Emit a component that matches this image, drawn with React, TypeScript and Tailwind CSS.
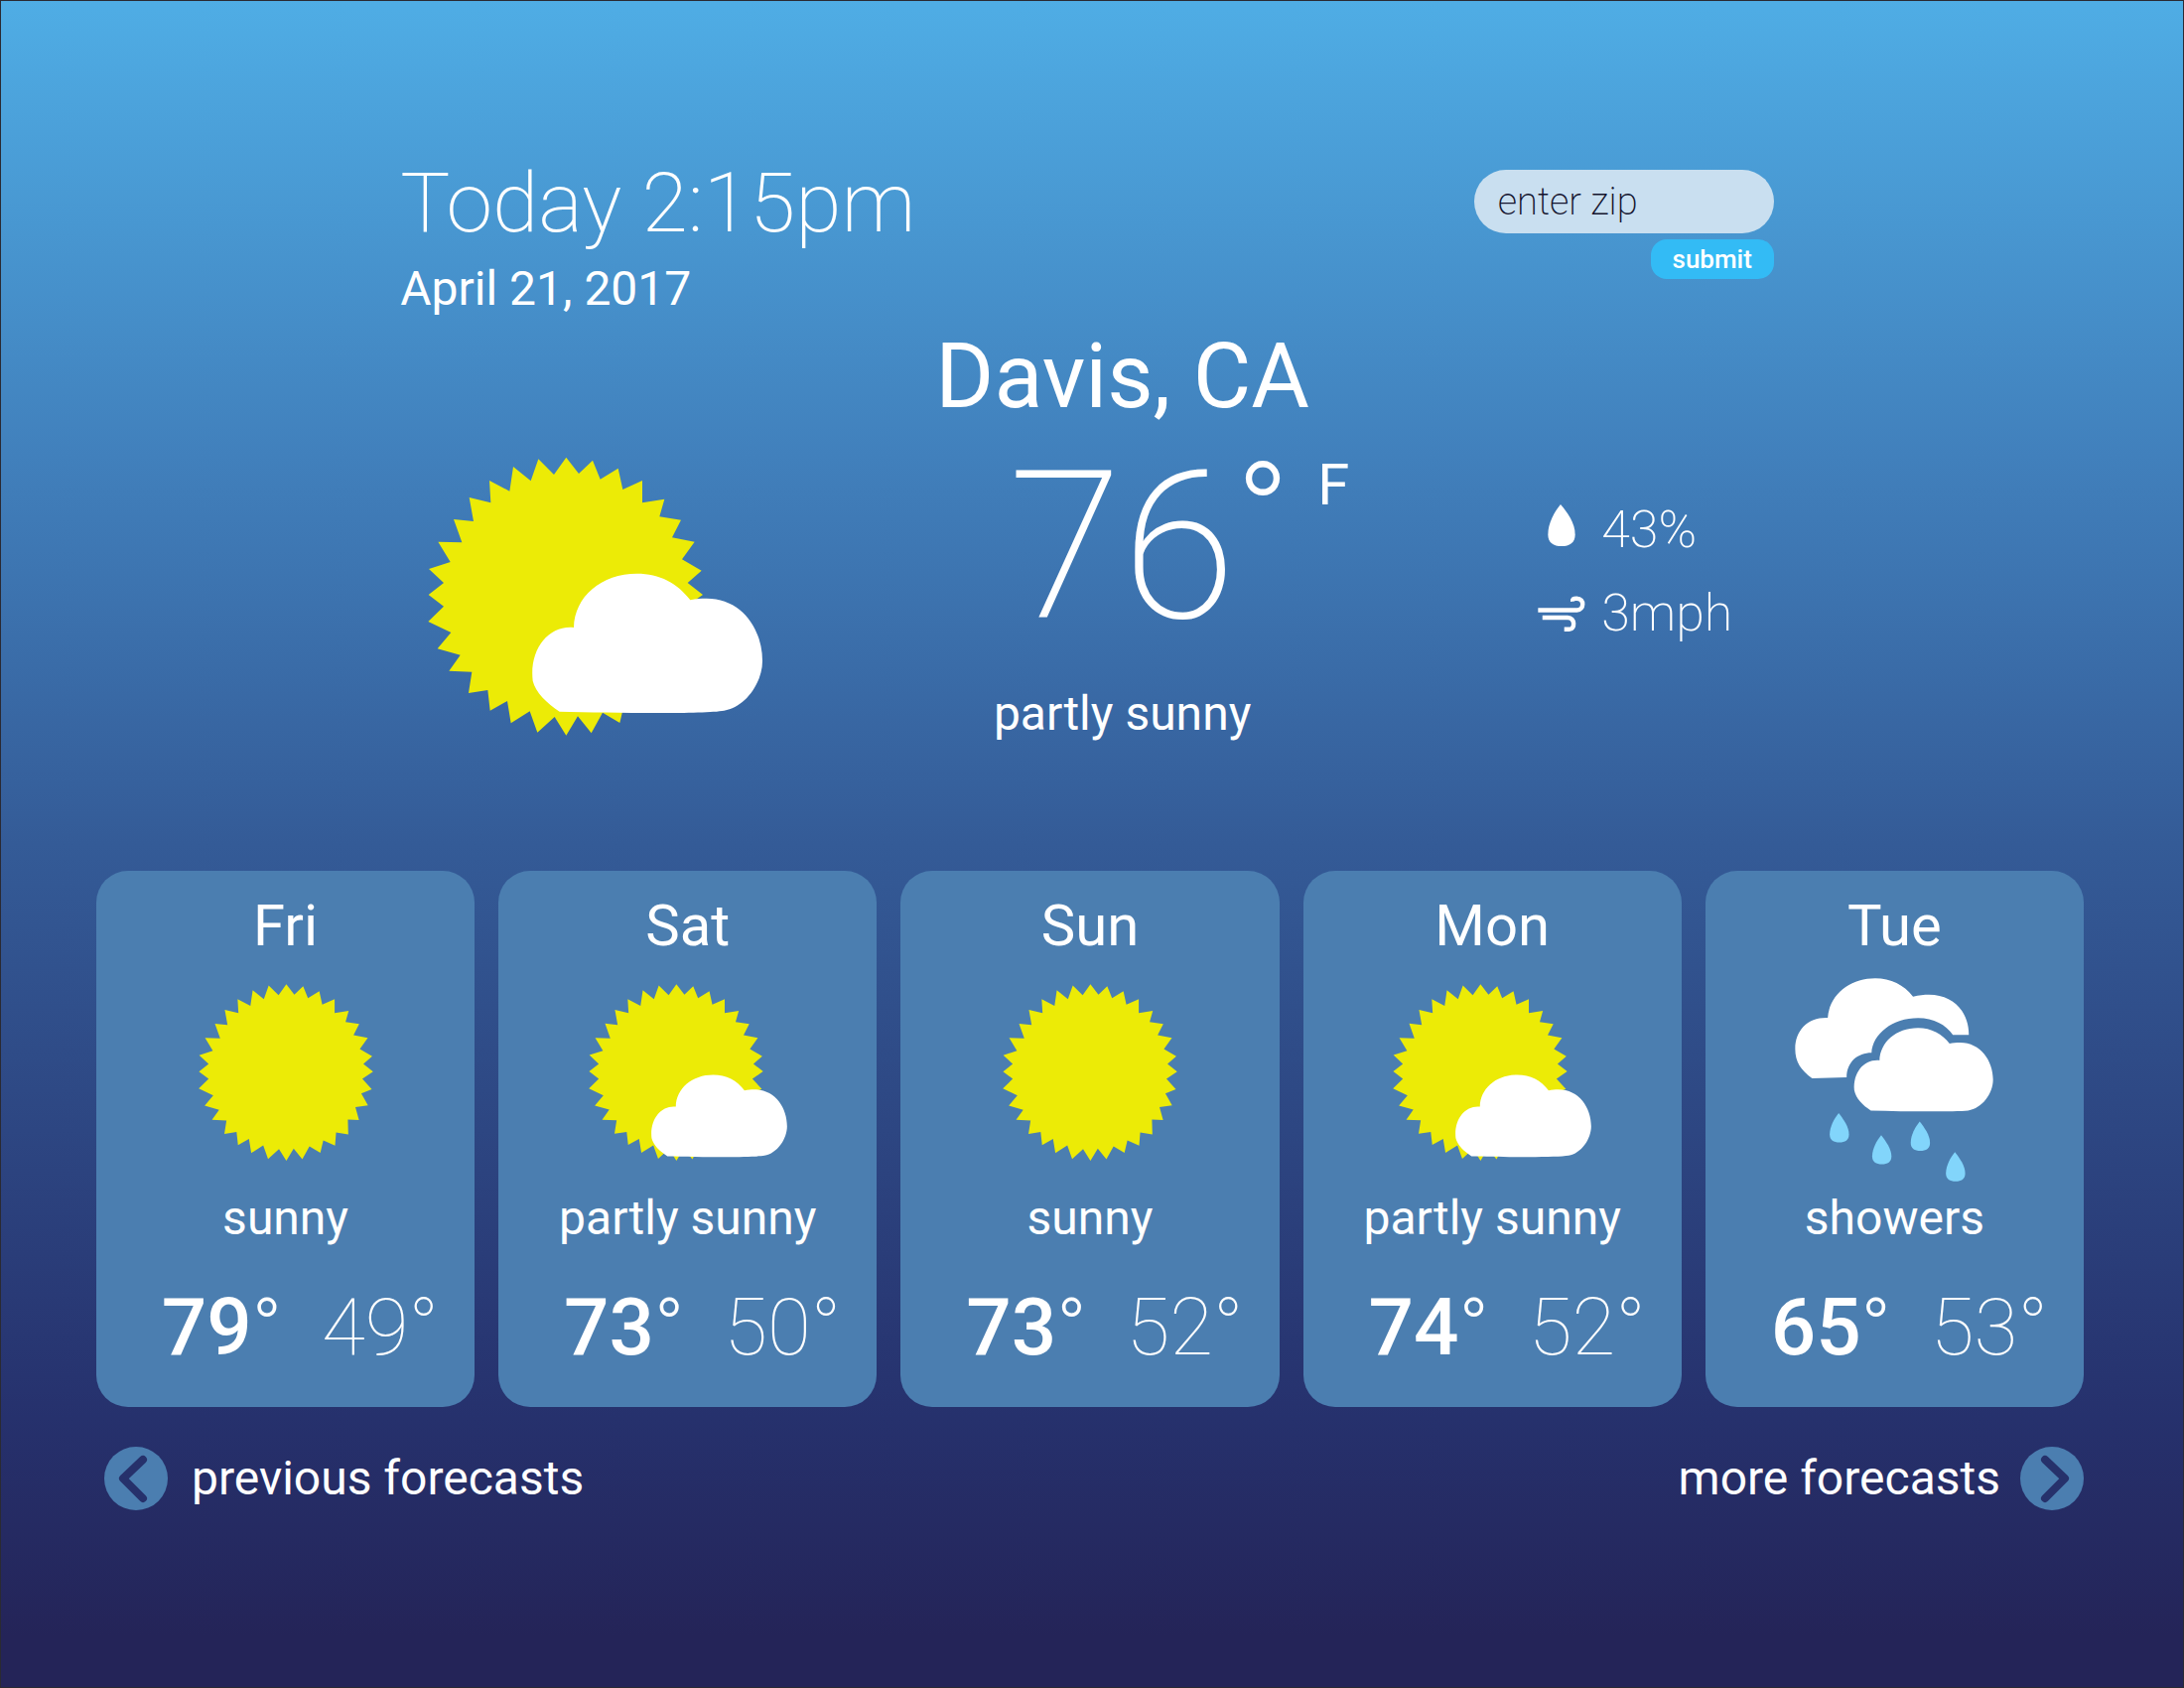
type Condition = 'sunny' | 'partly sunny' | 'showers';

type Forecast = {
  day: string;
  condition: Condition;
  high: number;
  low: number;
};

const forecasts: Forecast[] = [
  { day: 'Fri', condition: 'sunny', high: 79, low: 49 },
  { day: 'Sat', condition: 'partly sunny', high: 73, low: 50 },
  { day: 'Sun', condition: 'sunny', high: 73, low: 52 },
  { day: 'Mon', condition: 'partly sunny', high: 74, low: 52 },
  { day: 'Tue', condition: 'showers', high: 65, low: 53 },
];

const SUN_POINTS =
  '508,90 546,139 588,99 611,156 665,123 679,187 738,160 738,227 805,216 790,269 855,279 828,332 896,345 858,398 917,432 875,469 921,505 870,540 915,589 865,609 897,666 837,675 854,736 801,734 803,805 745,795 740,858 684,833 670,892 618,861 584,923 543,872 508,930 473,874 421,921 398,857 341,893 330,826 278,855 271,793 213,802 223,738 154,735 188,687 119,668 160,619 91,586 138,540 92,505 138,469 93,427 158,406 121,345 193,347 168,277 228,283 215,211 280,227 276,160 337,192 348,118 401,161 424,95 471,142';

const CLOUD_PATH =
  'M488,858 C450,833 415,800 407,765 C396,670 455,596 531,604 C533,510 615,441 722,441 C790,441 845,470 883,521 C900,517 915,516 932,516 C1040,516 1101,610 1101,705 C1101,770 1050,845 985,855 C920,866 650,862 488,858 Z';

function Sun() {
  return <polygon points={SUN_POINTS} fill="#eceb06" />;
}

function SunnyIcon() {
  return (
    <svg viewBox="90 60 832 874" className="w-44" aria-hidden="true">
      <Sun />
    </svg>
  );
}

function PartlySunnyIcon() {
  return (
    <svg viewBox="90 60 946 874" className="w-50" aria-hidden="true">
      <Sun />
      <path d={CLOUD_PATH} fill="#fff" transform="translate(388 521) scale(.93) translate(-405 -441)" />
    </svg>
  );
}

function CurrentIcon() {
  return (
    <svg viewBox="90 88 1014 846" className="w-[338px]" aria-hidden="true">
      <Sun />
      <path d={CLOUD_PATH} fill="#fff" />
    </svg>
  );
}

const RAINDROPS = [
  { x: 218, y: 479 },
  { x: 346, y: 545 },
  { x: 462, y: 504 },
  { x: 568, y: 596 },
];

function ShowersIcon() {
  return (
    <svg viewBox="86 72 598 613" className="w-50" aria-hidden="true">
      <path
        fill="#fff"
        d="M138,374 C105,350 87,325 87,285 C87,230 125,190 185,192 C190,120 255,73 328,73 C375,73 415,93 442,128 C460,123 475,122 490,122 C565,122 610,175 610,243 L562,243 C540,212 505,192 457,192 C380,192 320,240 317,297 C275,297 242,325 242,371 Z"
      />
      <path
        fill="#fff"
        d="M315,471 C290,455 270,435 265,410 C261,355 295,316 341,320 C343,265 390,222 457,222 C497,222 530,240 552,269 C562,267 572,266 584,266 C645,266 683,320 683,378 C683,420 650,465 608,471 C560,475 420,474 315,471 Z"
      />
      {RAINDROPS.map(({ x, y }) => (
        <path
          key={x}
          fill="#82d5fb"
          transform={`translate(${x} ${y})`}
          d="M0,0 C-13,16 -27,41 -27,64 C-27,81 -15,88 2,88 C19,88 31,81 31,64 C31,41 14,18 0,0 Z"
        />
      ))}
    </svg>
  );
}

function ConditionIcon({ condition }: { condition: Condition }) {
  if (condition === 'sunny') return <SunnyIcon />;
  if (condition === 'partly sunny') return <PartlySunnyIcon />;
  return <ShowersIcon />;
}

function HumidityIcon() {
  return (
    <svg viewBox="123 79 82 124" className="w-7" aria-hidden="true">
      <path
        fill="#fff"
        d="M161,79 C143,101 124,134 124,168 C124,192 140,202 164,202 C188,202 204,192 204,168 C204,134 181,102 161,79 Z"
      />
    </svg>
  );
}

function WindIcon() {
  return (
    <svg viewBox="86 352 142 108" className="w-12" fill="none" stroke="#fff" strokeWidth="13" aria-hidden="true">
      <path d="M87,395 H203 C224,395 227,360 202,360 C192,360 189,362 190,369" />
      <path d="M100,417 H175 C198,417 198,452 180,452 H165" />
    </svg>
  );
}

function ArrowIcon({ direction }: { direction: 'left' | 'right' }) {
  return (
    <span className="flex size-16 items-center justify-center rounded-full bg-[#4b7eb0]">
      <svg viewBox="0 0 64 64" className="size-16" fill="none" stroke="#26316b" strokeWidth="8" strokeLinecap="round" strokeLinejoin="round" aria-hidden="true">
        <path d={direction === 'left' ? 'M39,13 L19,32 L39,52' : 'M25,13 L45,32 L25,52'} />
      </svg>
    </span>
  );
}

function ForecastCard({ day, condition, high, low }: Forecast) {
  return (
    <li className="flex flex-col items-center rounded-[32px] bg-[#4b7eb0] pt-[26px] pb-10 leading-none">
      <h2 className="text-[58px]">{day}</h2>
      <div className="mt-6 flex h-52 items-start">
        <ConditionIcon condition={condition} />
      </div>
      <p className="mt-2.5 text-5xl leading-none">{condition}</p>
      <p className="mt-[46px] flex gap-10 self-end pr-9 text-[80px]">
        <span className="font-medium">
          {high}
          <span className="font-light">°</span>
        </span>
        <span className="font-thin">{low}°</span>
      </p>
    </li>
  );
}

export default function App() {
  return (
    <main className="min-h-screen border border-[#2a2a33] bg-[linear-gradient(to_bottom,#4fade5_0%,#4180bc_27%,#345b97_50%,#26316d_84%,#242458_97%)] pt-[162px] pr-[100px] pb-40 pl-24 font-['Roboto',sans-serif] leading-none font-normal text-white">
      <header className="flex items-start justify-between pr-[15.6%] pl-[15.3%]">
        <div className="flex flex-col gap-5">
          <h1 className="text-[84px] font-extralight">Today 2:15pm</h1>
          <time dateTime="2017-04-21" className="text-5xl leading-none">
            April 21, 2017
          </time>
        </div>
        <form className="mt-2 flex flex-col items-end gap-1.5" onSubmit={(e) => e.preventDefault()}>
          <input
            type="text"
            aria-label="enter zip"
            placeholder="enter zip"
            className="h-16 w-[302px] rounded-full bg-[#c9dff0] px-6 text-[38px] font-extralight text-[#14142e] outline-none placeholder:text-[#14142e]"
          />
          <button type="submit" className="h-10 w-31 rounded-2xl bg-[#33bbf5] text-[26px] font-medium">
            submit
          </button>
        </form>
      </header>

      <section className="mt-5 grid grid-cols-[36fr_33fr_31fr] pr-[15.5%] pl-[15.3%]">
        <div className="flex items-start pt-[125px] pl-7">
          <CurrentIcon />
        </div>
        <div className="flex flex-col items-center">
          <h2 className="text-[90px]">Davis, CA</h2>
          <div className="mt-[22px] grid grid-cols-[1fr_auto_1fr]">
            <span className="col-start-2 text-[208px] font-extralight">76</span>
            <span className="flex items-start gap-7">
              <span className="text-[144px] font-light">°</span>
              <span className="pt-3 text-[58px]">F</span>
            </span>
          </div>
          <p className="mt-10 text-5xl leading-none">partly sunny</p>
        </div>
        <dl className="flex flex-col gap-8 self-start pt-[173px] pl-[190px] text-[52px] font-extralight">
          <div className="flex items-start gap-4">
            <dt className="flex w-12 justify-center" aria-label="humidity">
              <HumidityIcon />
            </dt>
            <dd>43%</dd>
          </div>
          <div className="flex items-center gap-4">
            <dt className="flex w-12 justify-center" aria-label="wind speed">
              <WindIcon />
            </dt>
            <dd>3mph</dd>
          </div>
        </dl>
      </section>

      <ul className="mt-[134px] grid grid-cols-5 gap-6">
        {forecasts.map((forecast) => (
          <ForecastCard key={forecast.day} {...forecast} />
        ))}
      </ul>

      <nav className="mt-10 flex items-center justify-between pl-2 text-5xl leading-none">
        <a href="#previous" className="flex items-center gap-6">
          <ArrowIcon direction="left" />
          previous forecasts
        </a>
        <a href="#more" className="flex items-center gap-5">
          more forecasts
          <ArrowIcon direction="right" />
        </a>
      </nav>
    </main>
  );
}
